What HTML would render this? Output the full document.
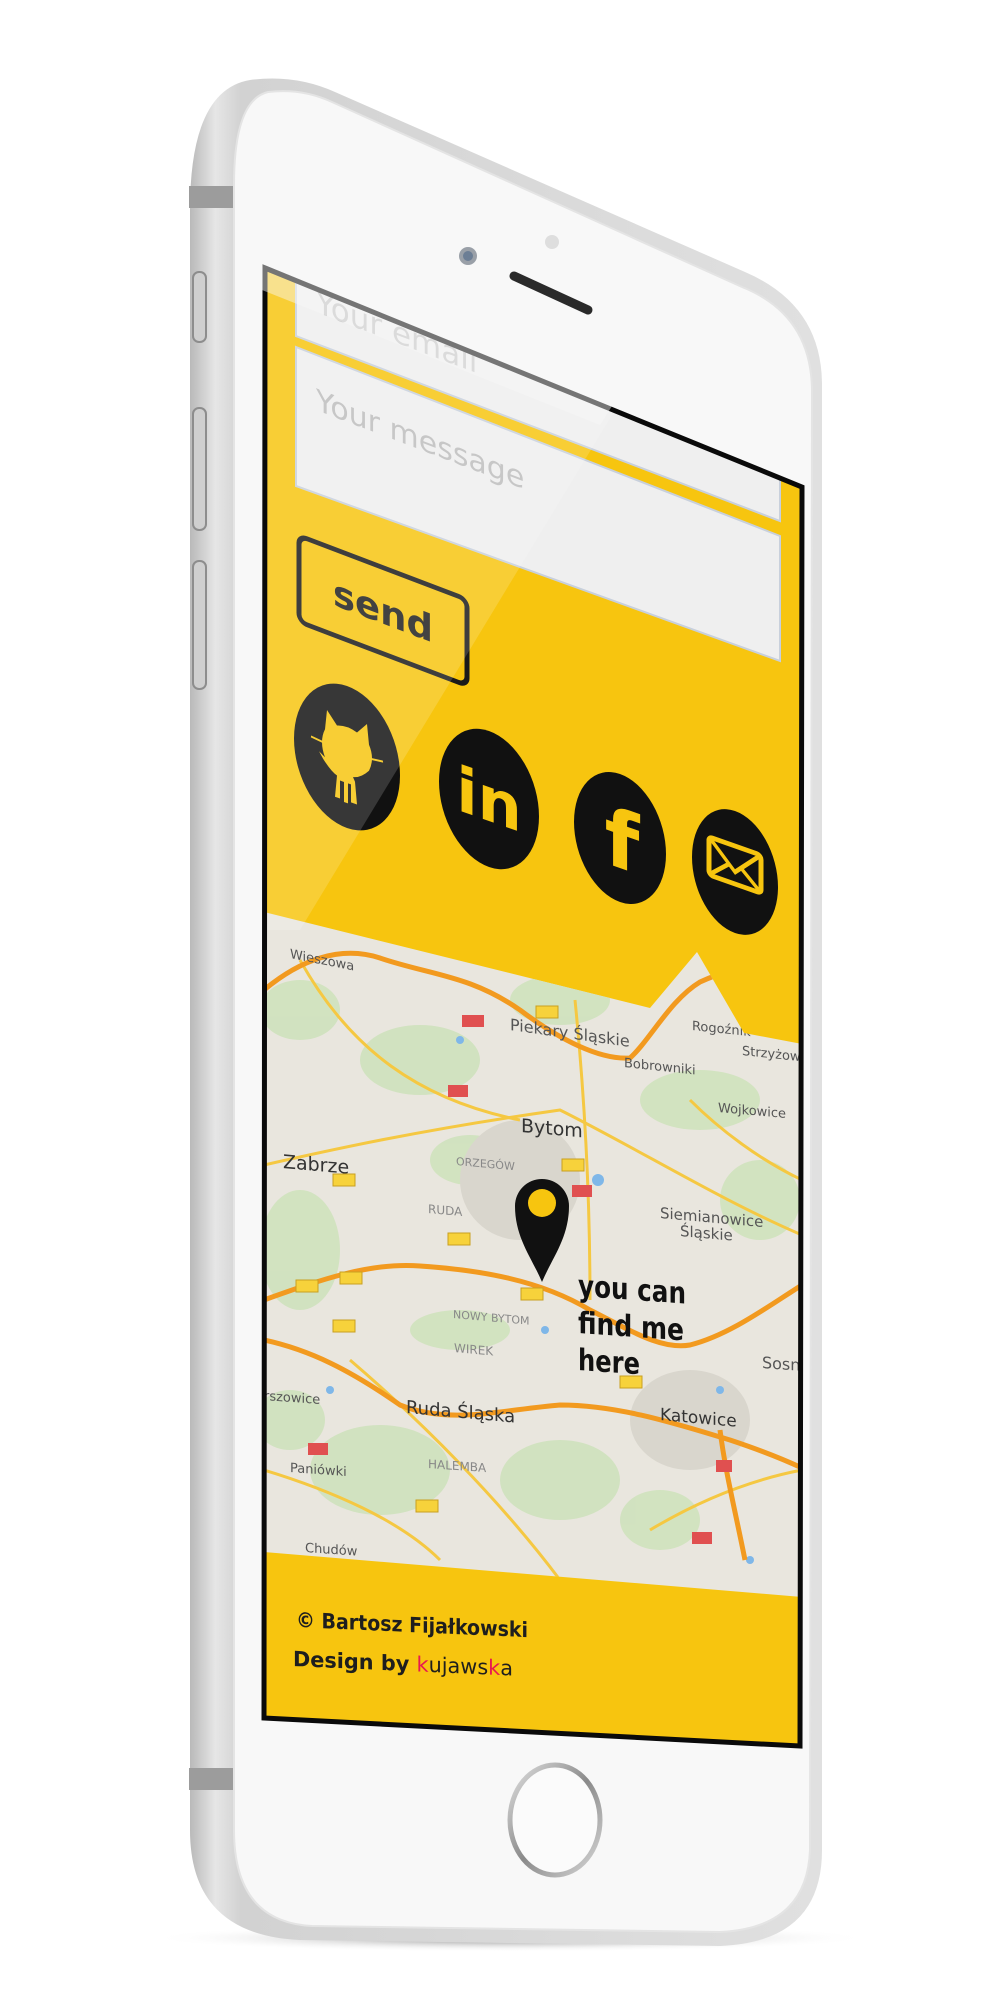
<!DOCTYPE html>
<html><head><meta charset="utf-8"><style>
html,body{margin:0;padding:0;background:#fff;width:1000px;height:2000px;overflow:hidden}
svg{display:block}
text{font-family:"DejaVu Sans","Liberation Sans",sans-serif}
</style></head><body>
<svg width="1000" height="2000" viewBox="0 0 1000 2000" xmlns="http://www.w3.org/2000/svg">
<defs>
<linearGradient id="body" x1="0" x2="1" y1="0" y2="0">
<stop offset="0" stop-color="#b9b9b9"/><stop offset="0.04" stop-color="#e6e6e6"/><stop offset="0.08" stop-color="#d2d2d2"/><stop offset="1" stop-color="#e0e0e0"/>
</linearGradient>
<linearGradient id="ring" x1="0" x2="1" y1="0" y2="1">
<stop offset="0" stop-color="#e0e0e0"/><stop offset="0.5" stop-color="#8a8a8a"/><stop offset="1" stop-color="#d8d8d8"/>
</linearGradient>
<radialGradient id="shadow" cx="0.5" cy="0.5" r="0.5"><stop offset="0" stop-color="#777"/><stop offset="1" stop-color="#fff" stop-opacity="0"/></radialGradient>
<clipPath id="scr"><polygon points="265,268 802,487 800,1746 264,1718"/></clipPath>
<clipPath id="mapc"><polygon points="264,912 650,1008 697,952 744,1033 802,1044 802,1597 264,1552"/></clipPath>
</defs>

<ellipse cx="510" cy="1938" rx="360" ry="14" fill="url(#shadow)"/>
<path d="M250,80 Q190,90 190,210 L190,1830 Q190,1935 300,1940 L720,1946 Q822,1942 822,1850 L822,385 Q822,305 745,272 L335,92 Q295,74 250,80 Z" fill="url(#body)"/>
<rect x="189" y="186" width="48" height="22" fill="#9c9c9c"/>
<rect x="189" y="1768" width="48" height="22" fill="#9c9c9c"/>
<rect x="193" y="272" width="13" height="70" rx="6" fill="#cfcfcf" stroke="#8d8d8d" stroke-width="2"/>
<rect x="193" y="408" width="13" height="122" rx="6" fill="#cfcfcf" stroke="#8d8d8d" stroke-width="2"/>
<rect x="193" y="561" width="13" height="128" rx="6" fill="#cfcfcf" stroke="#8d8d8d" stroke-width="2"/>
<path d="M268,92 Q234,100 234,185 L234,1830 Q234,1922 312,1926 L720,1932 Q807,1928 810,1850 L812,392 Q812,315 742,287 L332,102 Q302,88 268,92 Z" fill="#f8f8f8" stroke="#e4e4e4" stroke-width="2"/>
<circle cx="468" cy="256" r="9" fill="#9aa0a8"/><circle cx="468" cy="256" r="5" fill="#6c7e95"/>
<circle cx="552" cy="242" r="7" fill="#dedede"/>
<line x1="514" y1="276" x2="588" y2="310" stroke="#2a2a2a" stroke-width="9" stroke-linecap="round"/>

<g clip-path="url(#scr)">
<rect x="240" y="240" width="600" height="1540" fill="#f7c50f"/>
<polygon points="296,200 780,380 780,521 296,336" fill="#efefef" stroke="#c8d0dc" stroke-width="2"/>
<text transform="translate(316,312) skewY(20.8)" font-size="31" fill="#b9b9b9">Your email</text>
<polygon points="296,347 780,536 780,661 296,486" fill="#efefef" stroke="#c8d0dc" stroke-width="2"/>
<text transform="translate(316,410) skewY(20.8)" font-size="30" fill="#bdbdbd">Your message</text>
<g transform="translate(297,533) skewY(20.8)">
<rect x="2" y="2" width="168" height="86" rx="8" fill="none" stroke="#1a1a1a" stroke-width="5"/>
<text x="86" y="58" text-anchor="middle" font-size="37" font-weight="bold" fill="#1e1e1e">send</text>
</g>
<g transform="translate(347,757) skewY(19.3)">
<ellipse cx="0" cy="0" rx="53" ry="71" fill="#111"/>
<path d="M-20,-40 L-10,-28 Q0,-32 10,-28 L20,-40 L22,-20 Q28,-8 22,6 Q14,16 6,18 L8,22 L10,44 L4,44 L4,26 L1,26 L1,46 L-3,46 L-3,26 L-7,26 L-7,44 L-12,44 L-10,22 Q-16,20 -24,10 L-28,4 L-22,8 Q-28,-6 -22,-20 Z" fill="#f7c50f"/>
<line x1="-36" y1="-8" x2="-20" y2="-6" stroke="#f7c50f" stroke-width="2"/><line x1="20" y1="-6" x2="36" y2="-8" stroke="#f7c50f" stroke-width="2"/>
</g>
<g transform="translate(489,799) skewY(19.3)">
<ellipse cx="0" cy="0" rx="50" ry="68" fill="#111"/>
<text x="0" y="22" text-anchor="middle" font-size="62" font-weight="bold" fill="#f7c50f">in</text>
</g>
<g transform="translate(620,838) skewY(19.3)">
<ellipse cx="0" cy="0" rx="46" ry="64" fill="#111"/>
<text x="2" y="30" text-anchor="middle" font-size="80" font-weight="bold" fill="#f7c50f">f</text>
</g>
<g transform="translate(735,872) skewY(19.3)">
<ellipse cx="0" cy="0" rx="43" ry="61" fill="#111"/>
<rect x="-26" y="-26" width="52" height="38" rx="4" fill="none" stroke="#f7c50f" stroke-width="5"/>
<path d="M-24,-24 L0,0 L24,-24 M-24,10 L-6,-6 M24,10 L6,-6" fill="none" stroke="#f7c50f" stroke-width="4"/>
</g>

<g clip-path="url(#mapc)">
<rect x="260" y="900" width="550" height="720" fill="#e9e6de"/>
<g fill="#cfe2bd" opacity="0.9">
<ellipse cx="300" cy="1010" rx="40" ry="30"/><ellipse cx="420" cy="1060" rx="60" ry="35"/><ellipse cx="560" cy="1000" rx="50" ry="25"/>
<ellipse cx="700" cy="1100" rx="60" ry="30"/><ellipse cx="300" cy="1250" rx="40" ry="60"/><ellipse cx="460" cy="1330" rx="50" ry="20"/>
<ellipse cx="380" cy="1470" rx="70" ry="45"/><ellipse cx="560" cy="1480" rx="60" ry="40"/><ellipse cx="760" cy="1200" rx="40" ry="40"/>
<ellipse cx="660" cy="1520" rx="40" ry="30"/><ellipse cx="290" cy="1420" rx="35" ry="30"/><ellipse cx="470" cy="1160" rx="40" ry="25"/>
</g>
<g fill="#d9d6cd"><ellipse cx="520" cy="1180" rx="60" ry="60"/><ellipse cx="690" cy="1420" rx="60" ry="50"/></g>
<g fill="#7fb7e8"><circle cx="598" cy="1180" r="6"/><circle cx="460" cy="1040" r="4"/><circle cx="720" cy="1390" r="4"/><circle cx="545" cy="1330" r="4"/><circle cx="330" cy="1390" r="4"/><circle cx="750" cy="1560" r="4"/></g>
<g fill="none" stroke="#f5c842" stroke-width="3">
<path d="M264,1165 C330,1150 420,1130 560,1110 C640,1150 720,1200 802,1235"/>
<path d="M300,960 C350,1050 420,1100 520,1120"/>
<path d="M575,1000 C585,1100 590,1200 590,1300"/>
<path d="M350,1360 C420,1420 500,1500 560,1580"/>
<path d="M264,1470 C330,1490 400,1520 440,1560"/>
<path d="M650,1530 C700,1500 750,1480 802,1470"/>
<path d="M690,1100 C720,1130 760,1160 802,1180"/>
</g>
<g fill="none" stroke="#f29a1f" stroke-width="5">
<path d="M264,990 C300,960 340,945 380,958 C430,975 470,975 520,1010 C560,1040 600,1060 630,1058 C650,1040 670,1000 700,982 C730,968 770,960 802,955"/>
<path d="M264,1300 C320,1280 370,1262 420,1266 C480,1270 540,1280 590,1310 C630,1330 660,1350 690,1345 C730,1335 770,1305 802,1285"/>
<path d="M264,1340 C310,1350 350,1370 400,1405 C450,1425 500,1410 560,1405 C620,1405 680,1425 730,1440 C760,1450 785,1460 802,1468"/>
<path d="M720,1430 C725,1470 735,1510 745,1560"/>
</g>
<g font-size="13" fill="#555">
<text transform="translate(290,958) skewY(11)">Wieszowa</text>
<text transform="translate(510,1030) skewY(8)" font-size="16">Piekary Śląskie</text>
<text transform="translate(624,1067) skewY(6)">Bobrowniki</text>
<text transform="translate(692,1030) skewY(6)">Rogoźnik</text>
<text transform="translate(742,1055) skewY(6)">Strzyżowice</text>
<text transform="translate(521,1132) skewY(5)" font-size="19" fill="#333">Bytom</text>
<text transform="translate(718,1112) skewY(5)">Wojkowice</text>
<text transform="translate(283,1168) skewY(5)" font-size="19" fill="#333">Zabrze</text>
<text transform="translate(428,1213) skewY(5)" font-size="12" fill="#888">RUDA</text>
<text transform="translate(456,1165) skewY(5)" font-size="11" fill="#888">ORZEGÓW</text>
<text transform="translate(660,1218) skewY(5)" font-size="15">Siemianowice</text>
<text transform="translate(680,1236) skewY(5)" font-size="15">Śląskie</text>
<text transform="translate(453,1318) skewY(5)" font-size="11" fill="#888">NOWY BYTOM</text>
<text transform="translate(454,1352) skewY(5)" font-size="12" fill="#888">WIREK</text>
<text transform="translate(406,1413) skewY(5)" font-size="18" fill="#333">Ruda Śląska</text>
<text transform="translate(660,1420) skewY(5)" font-size="17" fill="#333">Katowice</text>
<text transform="translate(428,1468) skewY(4)" font-size="12" fill="#888">HALEMBA</text>
<text transform="translate(290,1472) skewY(4)">Paniówki</text>
<text transform="translate(305,1552) skewY(4)">Chudów</text>
<text transform="translate(762,1368) skewY(4)" font-size="16">Sosno</text>
<text transform="translate(264,1400) skewY(4)">rszowice</text>
</g>
<g fill="#f7d23b" stroke="#c9a020" stroke-width="1">
<rect x="333" y="1174" width="22" height="12"/><rect x="448" y="1233" width="22" height="12"/><rect x="536" y="1006" width="22" height="12"/>
<rect x="562" y="1159" width="22" height="12"/><rect x="296" y="1280" width="22" height="12"/><rect x="340" y="1272" width="22" height="12"/>
<rect x="521" y="1288" width="22" height="12"/><rect x="333" y="1320" width="22" height="12"/><rect x="620" y="1376" width="22" height="12"/><rect x="416" y="1500" width="22" height="12"/>
</g>
<g fill="#e05050"><rect x="462" y="1015" width="22" height="12"/><rect x="448" y="1085" width="20" height="12"/><rect x="572" y="1185" width="20" height="12"/><rect x="308" y="1443" width="20" height="12"/><rect x="692" y="1532" width="20" height="12"/><rect x="716" y="1460" width="16" height="12"/></g>
</g>

<path d="M542,1282 C532,1258 515,1238 515,1206 A27,27 0 0 1 569,1206 C569,1238 552,1258 542,1282 Z" fill="#111"/>
<circle cx="542" cy="1203" r="14" fill="#f7c50f"/>
<g font-weight="bold" font-size="30" fill="#111">
<text transform="translate(578,1296) skewY(4)" textLength="108" lengthAdjust="spacingAndGlyphs">you can</text>
<text transform="translate(578,1333) skewY(4)" textLength="106" lengthAdjust="spacingAndGlyphs">find me</text>
<text transform="translate(578,1370) skewY(4)" textLength="62" lengthAdjust="spacingAndGlyphs">here</text>
</g>

<text transform="translate(296,1627) skewY(2.5)" font-size="21" font-weight="bold" fill="#1e1e1e" textLength="232" lengthAdjust="spacingAndGlyphs">© Bartosz Fijałkowski</text>
<text transform="translate(293,1666) skewY(2.5)" font-size="21" font-weight="bold" fill="#1e1e1e" textLength="220" lengthAdjust="spacingAndGlyphs">Design by <tspan fill="#e8194f" font-weight="normal">k</tspan><tspan font-weight="normal">ujaws</tspan><tspan fill="#e8194f" font-weight="normal">k</tspan><tspan font-weight="normal">a</tspan></text>

<polygon points="200,80 690,270 612,415 300,930 200,930" fill="#fff" opacity="0.16"/>
</g>
<polygon points="265,268 802,487 800,1746 264,1718" fill="none" stroke="#0a0a0a" stroke-width="5"/>
<polygon points="262,264 612,406 600,425 262,290" fill="#f8f8f8" opacity="0.45"/>

<ellipse cx="555" cy="1820" rx="45" ry="55" fill="#fbfbfb" stroke="url(#ring)" stroke-width="5"/>
</svg>
</body></html>
